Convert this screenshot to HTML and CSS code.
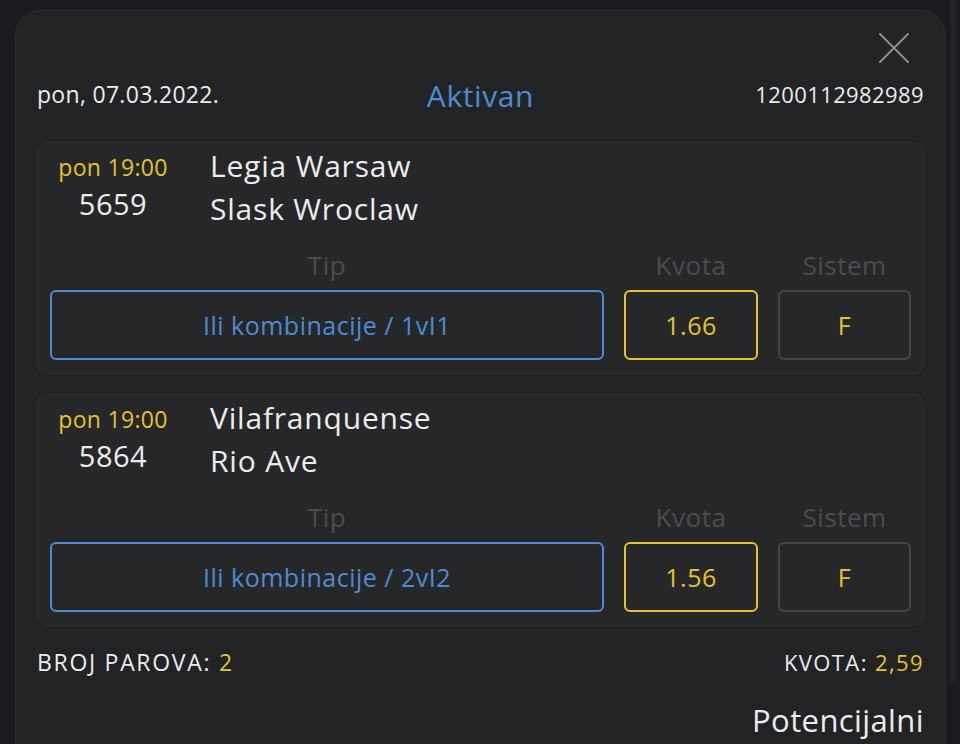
FILE: index.html
```html
<!DOCTYPE html>
<html lang="hr">
<head>
<meta charset="utf-8">
<title>Tiket</title>
<link rel="stylesheet" href="styles.css">
</head>
<body>
<div class="screen">
  <div class="panel">
    <div class="close-row">
      <svg class="close" width="30" height="30" viewBox="0 0 30 30" aria-label="Zatvori">
        <path d="M1 1 L29 29 M29 1 L1 29" stroke="#8c8d8f" stroke-width="2" stroke-linecap="round" fill="none"/>
      </svg>
    </div>
    <div class="info-row">
      <span class="date">pon, 07.03.2022.</span>
      <span class="status">Aktivan</span>
      <span class="ticket-id">1200112982989</span>
    </div>

    <div class="match">
      <div class="match-top">
        <div class="when">
          <div class="time">pon 19:00</div>
          <div class="code">5659</div>
        </div>
        <div class="teams">
          <div class="team">Legia Warsaw</div>
          <div class="team">Slask Wroclaw</div>
        </div>
      </div>
      <div class="grid labels">
        <span>Tip</span><span>Kvota</span><span>Sistem</span>
      </div>
      <div class="grid boxes">
        <div class="box tip">Ili kombinacije / 1vI1</div>
        <div class="box odd">1.66</div>
        <div class="box sys">F</div>
      </div>
    </div>

    <div class="match">
      <div class="match-top">
        <div class="when">
          <div class="time">pon 19:00</div>
          <div class="code">5864</div>
        </div>
        <div class="teams">
          <div class="team">Vilafranquense</div>
          <div class="team">Rio Ave</div>
        </div>
      </div>
      <div class="grid labels">
        <span>Tip</span><span>Kvota</span><span>Sistem</span>
      </div>
      <div class="grid boxes">
        <div class="box tip">Ili kombinacije / 2vI2</div>
        <div class="box odd">1.56</div>
        <div class="box sys">F</div>
      </div>
    </div>

    <div class="summary">
      <span class="pairs">BROJ PAROVA: <b class="y">2</b></span>
      <span>KVOTA: <b class="y">2,59</b></span>
    </div>
    <div class="potential">Potencijalni</div>
  </div>
  <div class="scrollbar"></div>
</div>
</body>
</html>
```

FILE: styles.css
```css
* { box-sizing: border-box; }
html, body { margin: 0; padding: 0; }
body {
  background: #1a1b1e;
  font-family: "Open Sans", "DejaVu Sans", sans-serif;
  color: #ececec;
  width: 960px;
  height: 744px;
  overflow: hidden;
}
.screen {
  position: relative;
  height: 744px;
  padding: 10px 0 0 15px;
}
.panel {
  width: 931px;
  height: 760px;
  background: #222325;
  border: 1px solid #2d2e31;
  border-radius: 26px 26px 0 0;
  padding: 0 21px;
}
.scrollbar {
  position: absolute;
  left: 950px;
  top: 0;
  width: 6px;
  height: 682px;
  background: #222326;
}
.close-row {
  display: flex;
  justify-content: flex-end;
  padding: 22px 15px 0 0;
  height: 53px;
}
.info-row {
  display: grid;
  grid-template-columns: 1fr auto 1fr;
  align-items: center;
  margin-top: 15px;
  height: 30px;
  line-height: 30px;
}
.date { font-size: 23px; letter-spacing: 0.3px; }
.status { font-size: 30px; color: #4f8bd1; letter-spacing: 0.6px; position: relative; top: 2px; }
.ticket-id { font-size: 22px; text-align: right; letter-spacing: 0.4px; }

.match {
  margin-top: 33px;
  background: #262729;
  border: 1px solid #2e2f32;
  border-radius: 10px;
  padding: 12px 12px 13px;
}
.match + .match { margin-top: 20px; }
.match-top { display: flex; }
.when {
  width: 126px;
  text-align: center;
}
.time {
  color: #e5c232;
  font-size: 23px;
  line-height: 24px;
  letter-spacing: 0.3px;
}
.code {
  font-size: 29px;
  line-height: 30px;
  margin-top: 10px;
  letter-spacing: 0.5px;
}
.teams {
  margin-left: 34px;
  margin-top: -11px;
}
.team {
  font-size: 30px;
  line-height: 43px;
  letter-spacing: 0.8px;
}
.grid {
  display: grid;
  grid-template-columns: 1fr 134px 133px;
  column-gap: 20px;
}
.labels {
  margin-top: 21px;
  height: 28px;
  line-height: 28px;
  text-align: center;
  color: #4b4c4f;
  font-size: 26px;
  letter-spacing: 0.5px;
}
.boxes { margin-top: 11px; }
.box {
  height: 70px;
  border: 2px solid #454648;
  border-radius: 6px;
  display: flex;
  align-items: center;
  justify-content: center;
  font-size: 25px;
  letter-spacing: 0.5px;
}
.box.tip { border-color: #4f8bd1; color: #4f8bd1; }
.box.odd { border-color: #e5c232; color: #e5c232; }
.box.sys { color: #e5c232; }

.summary {
  display: flex;
  justify-content: space-between;
  margin-top: 22px;
  font-size: 22px;
  line-height: 28px;
  letter-spacing: 1.4px;
}
.summary .pairs { font-size: 23px; letter-spacing: 1.7px; }
.y { color: #e5c232; font-weight: normal; }
.potential {
  text-align: right;
  font-size: 31px;
  line-height: 36px;
  margin-top: 26px;
  letter-spacing: 0.4px;
}
```
